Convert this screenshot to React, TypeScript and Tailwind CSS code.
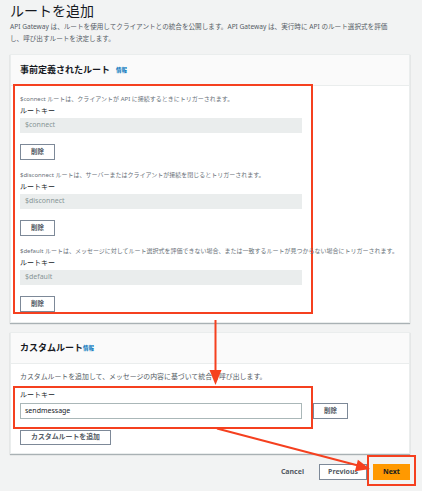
import type { ReactNode } from "react";

const RED = "#f5401f";

const predefinedRoutes = [
  {
    key: "$connect",
    note: "$connect ルートは、クライアントが API に接続するときにトリガーされます。",
  },
  {
    key: "$disconnect",
    note: "$disconnect ルートは、サーバーまたはクライアントが接続を閉じるとトリガーされます。",
  },
  {
    key: "$default",
    note: "$default ルートは、メッセージに対してルート選択式を評価できない場合、または一致するルートが見つからない場合にトリガーされます。",
  },
];

function Card({ title, info, children }: { title: string; info: ReactNode; children: ReactNode }) {
  return (
    <section className="border border-[#eaeded] bg-white shadow-[0_1px_1px_0_rgba(0,28,36,0.3)]">
      <div className="flex h-[31px] items-center border-b border-[#eaeded] bg-[#fafafa] px-[9px]">
        <h2 className="text-[9px] leading-[12px] font-bold text-[#16191f]">{title}</h2>
        {info}
      </div>
      {children}
    </section>
  );
}

function DeleteButton() {
  return (
    <button className="flex h-[16px] w-[35px] items-center justify-center border border-[#7d8998] bg-white text-[6.5px] font-bold text-[#545b64]">
      削除
    </button>
  );
}

export default function App() {
  return (
    <div
      className="relative min-h-[491px] overflow-hidden bg-[#f2f3f3] pr-[12px] pl-[10px]"
      style={{ fontFamily: '"Noto Sans", "Noto Sans CJK JP", sans-serif' }}
    >
      <h1 className="text-[14px] leading-[21px] text-[#16191f]">ルートを追加</h1>
      <p className="text-[6.6px] leading-[12px] text-[#545b64]">
        <span className="block whitespace-nowrap">
          API Gateway は、ルートを使用してクライアントとの統合を公開します。API Gateway は、実行時に API のルート選択式を評価
        </span>
        <span className="block whitespace-nowrap">し、呼び出すルートを決定します。</span>
      </p>

      <div className="mt-[9px] flex flex-col gap-[9px]">
        <Card
          title="事前定義されたルート"
          info={<span className="ml-[6px] text-[5.5px] font-bold text-[#0073bb]">情報</span>}
        >
          <div className="px-[2px] pb-[8px]">
            <div className="-mt-[2px] flex w-[300px] flex-col gap-[11px] border-2 border-[#f5401f] px-[5px] pt-[9px]">
              {predefinedRoutes.map((route) => (
                <div key={route.key} className="flex flex-col">
                  <p className="text-[6px] leading-[8px] whitespace-nowrap text-[#687078]">{route.note}</p>
                  <label className="mt-[4px] text-[7px] leading-[8px] text-[#16191f]">ルートキー</label>
                  <div className="mt-[3px] flex h-[15px] w-[282px] items-center bg-[#eaeded] px-[5px] text-[7px] text-[#879596]">
                    {route.key}
                  </div>
                  <div className="mt-[11px]">
                    <DeleteButton />
                  </div>
                </div>
              ))}
            </div>
          </div>
        </Card>

        <Card title="カスタムルート" info={<span className="text-[5.5px] font-bold text-[#0073bb]">情報</span>}>
          <div className="px-[2px] pt-[9px] pb-[8px]">
            <p className="px-[7px] text-[6.9px] leading-[8px] text-[#545b64]">
              カスタムルートを追加して、メッセージの内容に基づいて統合を呼び出します。
            </p>
            <div className="mt-[5px] flex items-start">
              <div className="flex w-[300px] flex-col border-2 border-[#f5401f] px-[5px] pt-[3px] pb-[8px]">
                <label className="text-[7px] leading-[8px] text-[#16191f]">ルートキー</label>
                <div className="mt-[4px] flex h-[16px] w-[282px] items-center border border-[#aab7b8] bg-white px-[4px] text-[7px] text-[#16191f]">
                  sendmessage
                </div>
              </div>
              <div className="mt-[17px]">
                <DeleteButton />
              </div>
            </div>
            <button className="mt-[1px] ml-[7px] flex h-[15px] w-[91px] items-center justify-center border border-[#7d8998] bg-white text-[6.9px] font-bold text-[#545b64]">
              カスタムルートを追加
            </button>
          </div>
        </Card>
      </div>

      <div className="mt-[1px] -mr-[6px] flex items-start justify-end">
        <span className="mt-[9px] text-[7px] leading-[16px] font-bold text-[#545b64]">Cancel</span>
        <button className="mt-[9px] ml-[15px] flex h-[16px] w-[48px] items-center justify-center border border-[#7d8998] bg-white text-[7px] font-bold text-[#545b64]">
          Previous
        </button>
        <div className="border-2 border-[#f5401f] px-[4px] pt-[7px] pb-[4px]">
          <button className="flex h-[16px] w-[37px] items-center justify-center bg-[#ff9900] text-[7px] font-bold text-[#16191f]">
            Next
          </button>
        </div>
      </div>

      <svg className="pointer-events-none absolute top-0 left-0" width="422" height="491" viewBox="0 0 422 491">
        <line x1="215.5" y1="320" x2="215.5" y2="372" stroke={RED} strokeWidth="2" />
        <polygon points="209.5,370 221.5,370 215.5,385" fill={RED} />
        <line x1="217" y1="428.5" x2="358" y2="465.5" stroke={RED} strokeWidth="2" />
        <polygon points="357.9,459.7 354.9,471.3 370,469" fill={RED} />
      </svg>
    </div>
  );
}
